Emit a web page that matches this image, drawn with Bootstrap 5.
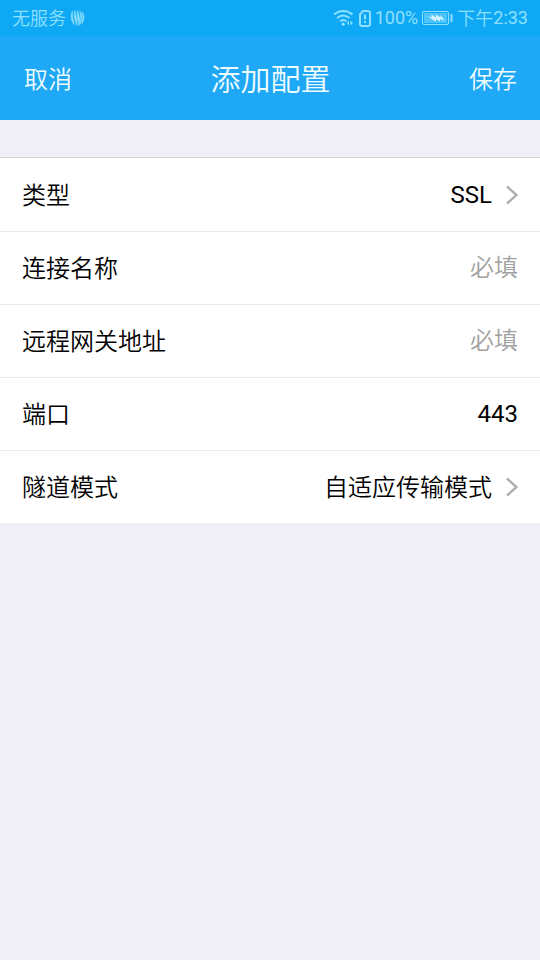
<!DOCTYPE html>
<html lang="zh-CN">
<head>
<meta charset="utf-8">
<meta name="viewport" content="width=device-width, initial-scale=1">
<title>添加配置</title>
<link rel="stylesheet" href="https://cdn.jsdelivr.net/npm/bootstrap@5.3.0/dist/css/bootstrap.min.css">
<style>
  body { background: #efeff5; color: #000; font-family: Roboto, "Noto Sans CJK SC", sans-serif; font-size: 24px; line-height: 36px; }
  .status-bar { height: 36px; padding: 0 12px; background: #0ea8f5; color: #8fe0ff; font-size: 18px; line-height: 36px; font-weight: 350; }
  .status-bar .latin { font-weight: 400; }
  .status-bar .cjk { padding-top: 2px; line-height: 34px; }
  .title-bar { height: 84px; padding: 4px 23px 0 24px; background: #1fa8f5; color: #effcff; font-weight: 300; }
  .title-bar h1 { font-size: 30px; line-height: 44px; font-weight: 350; }
  .title-bar .btn { font-size: 24px; line-height: 36px; font-weight: 350; color: inherit; }
  .settings { margin-top: 37px; border-top: 1px solid #d3d3d8; }
  .setting { height: 73px; padding: 0 22px; }
  .setting + .setting { border-top: 1px solid #ebebee; }
  .setting label, .setting .cjk { font-weight: 350; padding-top: 2px; }
  .setting input, .setting button { color: #000; font-size: 24px; line-height: 36px; }
  .setting input { outline: 0; min-width: 0; }
  .setting input::placeholder { color: #a0a0a0; font-weight: 350; opacity: 1; }
  .setting .btn { gap: 14px; }
</style>
<script defer src="https://cdn.jsdelivr.net/npm/bootstrap@5.3.0/dist/js/bootstrap.bundle.min.js"></script>
</head>
<body>
<div class="status-bar d-flex align-items-center justify-content-between">
  <div class="d-flex align-items-center">
    <span class="cjk me-1">无服务</span>
    <svg width="15" height="16" viewBox="0 0 15 16" fill="currentColor" aria-hidden="true">
      <path d="M2.500 1C.3 5 .8 11 4.500 15 2.800 10 2.200 6 2.500 1zM4.800.5C3.600 6 4.300 11 7.300 15.500 6.800 10 6 5 4.800.5zM7.200.5C7 6 7.500 11 9.200 15.500 10.200 10 9.500 5 7.200.5zM9.600 1c1.200 4 1.600 9 .6 13.500C12.500 10 12.300 5 9.600 1zM11.800 1.500c1.200 4 1.400 8 .2 12C14.800 10 14.500 5 11.800 1.500z" stroke="currentColor" stroke-width=".5"/>
    </svg>
  </div>
  <div class="d-flex align-items-center">
    <svg width="22" height="18" viewBox="0 0 22 18" fill="none" stroke="currentColor" stroke-width="2" aria-hidden="true">
      <path d="M1 5.500C6.500.7 14 .7 19.500 5.500M4 9c4-3.300 8.500-3.300 12.500 0M7 12.300c2-1.700 4.500-1.700 6.500 0"/>
      <circle cx="10.200" cy="15.200" r="1.600" fill="currentColor" stroke="none"/>
      <path d="M16 11.500v5l-2-2.500zM17.500 11.500v5l2.500-2.500z" fill="currentColor" stroke="none"/>
    </svg>
    <svg class="mx-1" width="12" height="17" viewBox="0 0 12 17" fill="none" stroke="currentColor" stroke-width="2" aria-hidden="true">
      <path d="M1 4.500 4 1h5Q11 1 11 3v11Q11 16 9 16H3Q1 16 1 14zM6 4.500v5M6 11v2"/>
    </svg>
    <span class="latin">100%</span>
    <svg class="ms-1" width="31" height="16" viewBox="0 0 31 16" aria-hidden="true">
      <rect x=".5" y="1.500" width="26" height="13" rx="1.500" fill="none" stroke="currentColor"/>
      <rect x="2" y="3" width="23" height="10" fill="currentColor" opacity=".5"/>
      <path d="m5.500 6 4 1.500V4.500l4.500 3V4.500l4.500 3V5l4 5.500-4.500-1.500v2.500L14 9v2.500L9.500 9z" fill="#d5f4ff"/>
      <path d="M29.500 4v8" stroke="currentColor" stroke-width="2"/>
    </svg>
    <span class="cjk ms-1">下午</span><span class="latin">2:33</span>
  </div>
</div>
<header class="title-bar d-flex align-items-center justify-content-between">
  <button type="button" class="btn border-0 p-0">取消</button>
  <h1 class="m-0">添加配置</h1>
  <button type="button" class="btn border-0 p-0">保存</button>
</header>
<main>
  <form class="settings bg-white">
    <div class="setting d-flex align-items-center">
      <label for="type">类型</label>
      <button type="button" id="type" class="btn border-0 p-0 flex-fill d-flex align-items-center justify-content-end">SSL
        <svg width="12" height="20" viewBox="0 0 12 20" fill="none" stroke="#b0b0b0" stroke-width="2.500" aria-hidden="true"><path d="m1 1.500 9.500 8.500L1 18.500"/></svg>
      </button>
    </div>
    <div class="setting d-flex align-items-center">
      <label for="name">连接名称</label>
      <input type="text" id="name" class="flex-fill border-0 p-0 bg-transparent text-end" placeholder="必填">
    </div>
    <div class="setting d-flex align-items-center">
      <label for="gateway">远程网关地址</label>
      <input type="text" id="gateway" class="flex-fill border-0 p-0 bg-transparent text-end" placeholder="必填">
    </div>
    <div class="setting d-flex align-items-center">
      <label for="port">端口</label>
      <input type="text" inputmode="numeric" id="port" class="flex-fill border-0 p-0 bg-transparent text-end" value="443">
    </div>
    <div class="setting d-flex align-items-center">
      <label for="mode">隧道模式</label>
      <button type="button" id="mode" class="btn border-0 p-0 flex-fill d-flex align-items-center justify-content-end"><span class="cjk">自适应传输模式</span>
        <svg width="12" height="20" viewBox="0 0 12 20" fill="none" stroke="#b0b0b0" stroke-width="2.500" aria-hidden="true"><path d="m1 1.500 9.500 8.500L1 18.500"/></svg>
      </button>
    </div>
  </form>
</main>
</body>
</html>
